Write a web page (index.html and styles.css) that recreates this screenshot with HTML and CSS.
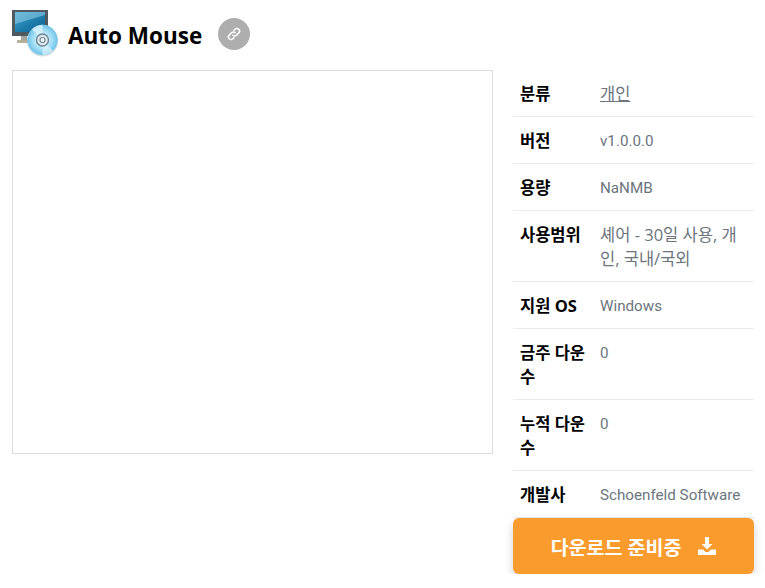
FILE: index.html
```html
<!DOCTYPE html>
<html lang="ko">
<head>
    <meta charset="UTF-8">
    <meta name="viewport" content="width=device-width, initial-scale=1.0">
    <title>Auto Mouse</title>
    <link rel="stylesheet" href="styles.css">
</head>
<body>
    <div class="container">
        <header class="title-bar">
            <svg class="app-icon" width="48" height="48" viewBox="0 0 48 48">
                <defs>
                    <linearGradient id="screen" x1="0" y1="0" x2="1" y2="1">
                        <stop offset="0" stop-color="#4ba6d0"/>
                        <stop offset="0.5" stop-color="#1f7fae"/>
                        <stop offset="1" stop-color="#0f5f8c"/>
                    </linearGradient>
                    <radialGradient id="disc" cx="0.5" cy="0.5" r="0.55">
                        <stop offset="0" stop-color="#e8f8fe"/>
                        <stop offset="0.55" stop-color="#a9e0f6"/>
                        <stop offset="1" stop-color="#5dbce6"/>
                    </radialGradient>
                </defs>
                <rect x="0" y="1" width="36" height="26" fill="#4f5a5f"/>
                <rect x="3" y="3" width="30" height="20" fill="url(#screen)"/>
                <path d="M3 3h30v3L3 15z" fill="#9ad6ee" opacity="0.5"/>
                <rect x="5" y="31" width="14" height="3" fill="#b5ae9b"/>
                <rect x="9" y="27" width="6" height="4" fill="#a5a79f"/>
                <circle cx="30.500" cy="32" r="15.500" fill="#5f7a86" opacity="0.22"/>
                <circle cx="30.500" cy="31" r="15" fill="url(#disc)" stroke="#8acce8" stroke-width="0.800"/>
                <path d="M30.500 31L20 20.500a15 15 0 0 1 10.500-4.500z" fill="#dcf4fc" opacity="0.8"/>
                <path d="M30.500 31L41 41.500a15 15 0 0 1-10.500 4.500z" fill="#dcf4fc" opacity="0.7"/>
                <circle cx="30.500" cy="31" r="6" fill="#dfe9ed" stroke="#6d8793" stroke-width="1.400"/>
                <circle cx="30.500" cy="31" r="2.500" fill="#f6fbfd" stroke="#6d8793" stroke-width="1.200"/>
            </svg>
            <h1 class="app-name">Auto Mouse</h1>
            <a class="share-btn" href="#">
                <svg width="16" height="16" viewBox="0 0 16 16" fill="none" stroke="#fff" stroke-width="1.500" stroke-linecap="round">
                    <path d="M6.800 9.200a2.600 2.600 0 0 0 3.700 0l2.300-2.300a2.600 2.600 0 0 0-3.700-3.700l-1 1"/>
                    <path d="M9.200 6.800a2.600 2.600 0 0 0-3.700 0L3.200 9.100a2.600 2.600 0 0 0 3.700 3.700l1-1"/>
                </svg>
            </a>
        </header>

        <div class="content">
            <div class="preview"></div>
            <aside class="side">
                <div class="info-row">
                    <span class="info-label">분류</span>
                    <span class="info-value"><a href="#">개인</a></span>
                </div>
                <div class="info-row">
                    <span class="info-label">버전</span>
                    <span class="info-value en">v1.0.0.0</span>
                </div>
                <div class="info-row">
                    <span class="info-label">용량</span>
                    <span class="info-value en">NaNMB</span>
                </div>
                <div class="info-row">
                    <span class="info-label">사용범위</span>
                    <span class="info-value">셰어 - 30일 사용, 개인, 국내/국외</span>
                </div>
                <div class="info-row">
                    <span class="info-label">지원 OS</span>
                    <span class="info-value en">Windows</span>
                </div>
                <div class="info-row">
                    <span class="info-label">금주 다운수</span>
                    <span class="info-value en">0</span>
                </div>
                <div class="info-row">
                    <span class="info-label">누적 다운수</span>
                    <span class="info-value en">0</span>
                </div>
                <div class="info-row">
                    <span class="info-label">개발사</span>
                    <span class="info-value en">Schoenfeld Software</span>
                </div>
                <a class="download-btn" href="#">
                    다운로드 준비중
                    <svg width="18" height="18" viewBox="0 0 18 18" fill="#fff">
                        <path d="M7 0h4v7h3.500L9 12.500 3.500 7H7z"/>
                        <path d="M0 12.500h5l2.500 2.500h3l2.500-2.500h5V18H0z"/>
                    </svg>
                </a>
            </aside>
        </div>
    </div>
</body>
</html>
```

FILE: styles.css
```css
* {
    margin: 0;
    padding: 0;
    box-sizing: border-box;
}

body {
    font-family: "Open Sans", "Noto Sans CJK KR", sans-serif;
    background: #fff;
    color: #000;
}

.container {
    padding: 9px 11px 0 12px;
}

.title-bar {
    display: flex;
    align-items: flex-start;
    height: 48px;
    margin-bottom: 13px;
}

.app-icon {
    flex-shrink: 0;
}

.app-name {
    margin-left: 8px;
    font-size: 22.5px;
    font-weight: 700;
    line-height: 54px;
}

.share-btn {
    display: flex;
    align-items: center;
    justify-content: center;
    width: 32px;
    height: 32px;
    margin-left: 16px;
    margin-top: 9px;
    border-radius: 50%;
    background: #aeaeae;
}

.content {
    display: flex;
    gap: 20px;
    align-items: flex-start;
}

.preview {
    width: 481px;
    height: 384px;
    border: 1px solid #dcdcdc;
}

.side {
    width: 241px;
}

.info-row {
    display: flex;
    padding: 11px 7px 10px;
    border-bottom: 1px solid #e9ecef;
    font-size: 16.5px;
    line-height: 24px;
}

.info-label {
    flex: 0 0 80px;
    padding-top: 1px;
    padding-right: 7px;
    font-weight: 700;
}

.info-value {
    flex: 1;
    padding-top: 1px;
    color: #6c757d;
}

.info-value a {
    color: #6c757d;
}

.en {
    font-family: Roboto, sans-serif;
    font-size: 15.2px;
}

.download-btn {
    display: flex;
    align-items: center;
    justify-content: center;
    gap: 17px;
    height: 56px;
    border-radius: 6px;
    background: #f99b2d;
    color: #fff;
    font-size: 19.5px;
    font-weight: 700;
    text-decoration: none;
    box-shadow: 0 4px 10px rgba(0, 0, 0, 0.18);
}
```
